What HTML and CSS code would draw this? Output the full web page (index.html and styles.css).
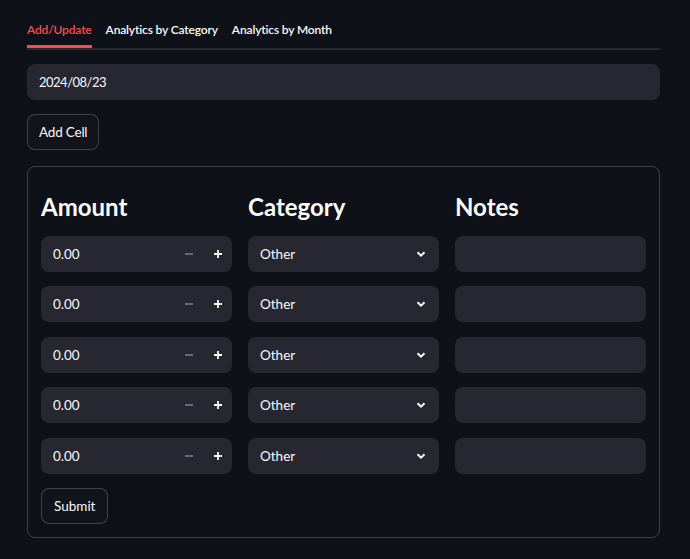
FILE: index.html
```html
<!DOCTYPE html>
<html lang="en">
<head>
<meta charset="utf-8">
<title>Expense Tracker</title>
<link rel="stylesheet" href="styles.css">
</head>
<body>
<main class="app">
  <nav class="tabs">
    <span class="tab active">Add/Update</span>
    <span class="tab">Analytics by Category</span>
    <span class="tab">Analytics by Month</span>
  </nav>

  <div class="date-input">2024/08/23</div>

  <button class="btn add-btn">Add Cell</button>

  <section class="form-box">
    <div class="grid">
      <h3 class="col-head">Amount</h3>
      <h3 class="col-head">Category</h3>
      <h3 class="col-head">Notes</h3>

      <div class="num-input"><span class="val">0.00</span><span class="step minus"><svg width="10" height="10" viewBox="0 0 10 10"><path d="M1 5h8" stroke="currentColor" stroke-width="1.6"/></svg></span><span class="step plus"><svg width="10" height="10" viewBox="0 0 10 10"><path d="M1 5h8M5 1v8" stroke="currentColor" stroke-width="1.8"/></svg></span></div>
      <div class="select"><span>Other</span><svg class="chev" width="12" height="12" viewBox="0 0 12 12"><path d="M2.5 4.2L6 7.7l3.5-3.5" fill="none" stroke="currentColor" stroke-width="2"/></svg></div>
      <div class="text-input"></div>

      <div class="num-input"><span class="val">0.00</span><span class="step minus"><svg width="10" height="10" viewBox="0 0 10 10"><path d="M1 5h8" stroke="currentColor" stroke-width="1.6"/></svg></span><span class="step plus"><svg width="10" height="10" viewBox="0 0 10 10"><path d="M1 5h8M5 1v8" stroke="currentColor" stroke-width="1.8"/></svg></span></div>
      <div class="select"><span>Other</span><svg class="chev" width="12" height="12" viewBox="0 0 12 12"><path d="M2.5 4.2L6 7.7l3.5-3.5" fill="none" stroke="currentColor" stroke-width="2"/></svg></div>
      <div class="text-input"></div>

      <div class="num-input"><span class="val">0.00</span><span class="step minus"><svg width="10" height="10" viewBox="0 0 10 10"><path d="M1 5h8" stroke="currentColor" stroke-width="1.6"/></svg></span><span class="step plus"><svg width="10" height="10" viewBox="0 0 10 10"><path d="M1 5h8M5 1v8" stroke="currentColor" stroke-width="1.8"/></svg></span></div>
      <div class="select"><span>Other</span><svg class="chev" width="12" height="12" viewBox="0 0 12 12"><path d="M2.5 4.2L6 7.7l3.5-3.5" fill="none" stroke="currentColor" stroke-width="2"/></svg></div>
      <div class="text-input"></div>

      <div class="num-input"><span class="val">0.00</span><span class="step minus"><svg width="10" height="10" viewBox="0 0 10 10"><path d="M1 5h8" stroke="currentColor" stroke-width="1.6"/></svg></span><span class="step plus"><svg width="10" height="10" viewBox="0 0 10 10"><path d="M1 5h8M5 1v8" stroke="currentColor" stroke-width="1.8"/></svg></span></div>
      <div class="select"><span>Other</span><svg class="chev" width="12" height="12" viewBox="0 0 12 12"><path d="M2.5 4.2L6 7.7l3.5-3.5" fill="none" stroke="currentColor" stroke-width="2"/></svg></div>
      <div class="text-input"></div>

      <div class="num-input"><span class="val">0.00</span><span class="step minus"><svg width="10" height="10" viewBox="0 0 10 10"><path d="M1 5h8" stroke="currentColor" stroke-width="1.6"/></svg></span><span class="step plus"><svg width="10" height="10" viewBox="0 0 10 10"><path d="M1 5h8M5 1v8" stroke="currentColor" stroke-width="1.8"/></svg></span></div>
      <div class="select"><span>Other</span><svg class="chev" width="12" height="12" viewBox="0 0 12 12"><path d="M2.5 4.2L6 7.7l3.5-3.5" fill="none" stroke="currentColor" stroke-width="2"/></svg></div>
      <div class="text-input"></div>
    </div>

    <button class="btn submit-btn">Submit</button>
  </section>
</main>
</body>
</html>
```

FILE: styles.css
```css
* { box-sizing: border-box; }

html, body {
  margin: 0;
  background: #0e1117;
  color: #fafafa;
  font-family: "Lato", "Open Sans", sans-serif;
}

.app {
  padding: 0 30px 0 27px;
  display: flex;
  flex-direction: column;
  align-items: flex-start;
}

.tabs {
  align-self: stretch;
  display: flex;
  gap: 14px;
  height: 50px;
  padding-top: 14px;
  border-bottom: 2px solid #262730;
}

.tab {
  font-size: 12px;
  font-weight: 600;
  letter-spacing: -0.15px;
  height: 34px;
  line-height: 32px;
  color: #fafafa;
}

.tab.active {
  color: #ff4b4b;
  border-bottom: 3px solid #ff4b4b;
}

.date-input {
  align-self: stretch;
  margin-top: 14px;
  height: 36px;
  background: #262730;
  border-radius: 8px;
  padding: 0 12px;
  font-size: 13px;
  letter-spacing: -0.5px;
  line-height: 36px;
}

.btn {
  font-family: inherit;
  font-size: 13.5px;
  color: #fafafa;
  background: #11141b;
  border: 1px solid rgba(250, 250, 250, 0.2);
  border-radius: 8px;
  height: 36px;
  padding: 0 12px;
  margin: 0;
}

.add-btn { margin-top: 14px; padding: 0 11px; letter-spacing: -0.2px; }

.form-box {
  align-self: stretch;
  margin-top: 16px;
  border: 1px solid rgba(250, 250, 250, 0.2);
  border-radius: 8px;
  padding: 13px;
  display: flex;
  flex-direction: column;
  align-items: flex-start;
}

.grid {
  align-self: stretch;
  display: grid;
  grid-template-columns: repeat(3, 1fr);
  column-gap: 16px;
  row-gap: 14.4px;
}

.col-head {
  margin: 0;
  padding-top: 12px;
  height: 41.6px;
  font-size: 24px;
  font-weight: 700;
  line-height: 30px;
}

.num-input, .select, .text-input {
  height: 36px;
  background: #262730;
  border-radius: 8px;
  display: flex;
  align-items: center;
  font-size: 13.5px;
}

.num-input { padding: 0 0 0 12px; }
.num-input .val { flex: 1; }
.step {
  width: 29px;
  height: 36px;
  display: flex;
  align-items: center;
  justify-content: center;
}
.step.minus { color: rgba(250, 250, 250, 0.4); }
.step.plus { color: #fafafa; }

.select {
  padding: 0 12px;
  justify-content: space-between;
}
.chev { color: #fafafa; }

.submit-btn { margin-top: 14px; }
```
